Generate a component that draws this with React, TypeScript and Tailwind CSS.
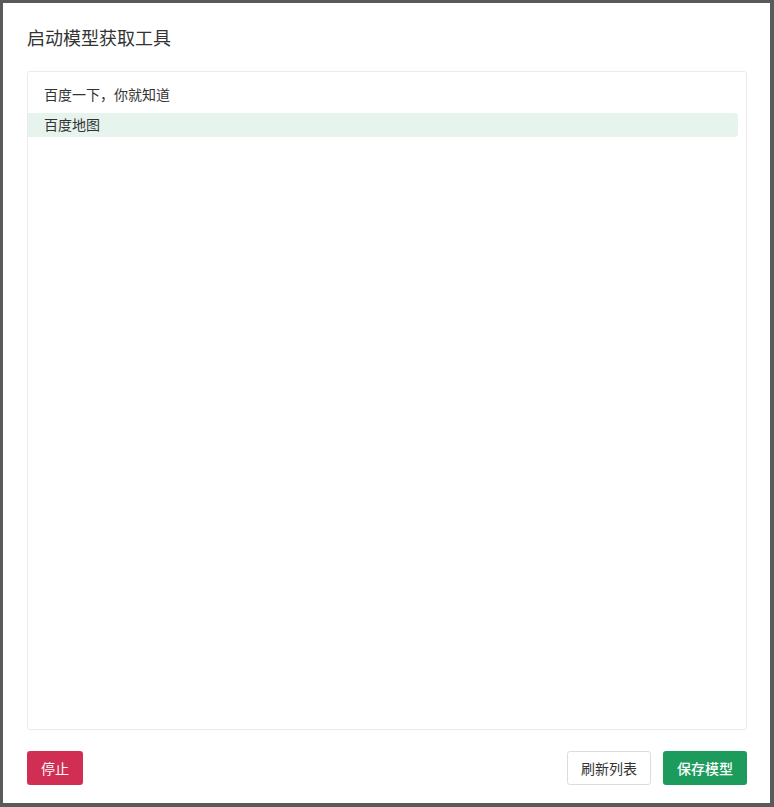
export default function App() {
  const items = [
    { label: "百度一下，你就知道", active: false },
    { label: "百度地图", active: true },
  ];

  return (
    <div
      className="w-full h-[807px] bg-[#5a5a5a] pt-[3px] pl-[3px] pr-[4px] pb-[4px]"
      style={{ fontFamily: '"Noto Sans CJK SC", "Noto Sans", sans-serif' }}
    >
      <div className="h-full bg-white flex flex-col pt-[22px] pl-6 pr-[23px] pb-[18px]">
        <h2 className="text-[18px] leading-6 text-[#333]">启动模型获取工具</h2>

        {/* Model list */}
        <div className="mt-[22px] flex-1 border border-[#ebebeb] rounded-[3px] pt-[11px] pr-2 flex flex-col gap-[6px]">
          {items.map((item) => (
            <div
              key={item.label}
              className={
                item.active
                  ? "h-6 leading-[22px] pl-4 text-sm text-[#333] bg-[#e6f4ed] rounded-r-[3px]"
                  : "h-6 leading-[22px] pl-4 text-sm text-[#333]"
              }
            >
              {item.label}
            </div>
          ))}
        </div>

        {/* Footer buttons */}
        <div className="mt-[21px] flex items-center">
          <button className="h-[34px] w-[56px] rounded-[3px] bg-[#d12e53] text-white text-sm">
            停止
          </button>
          <div className="flex-1" />
          <button className="h-[34px] w-[84px] rounded-[3px] border border-[#dcdcdc] bg-white text-[#333] text-sm">
            刷新列表
          </button>
          <button className="ml-3 h-[34px] w-[84px] rounded-[3px] bg-[#1c9b5c] text-white text-sm font-medium">
            保存模型
          </button>
        </div>
      </div>
    </div>
  );
}
